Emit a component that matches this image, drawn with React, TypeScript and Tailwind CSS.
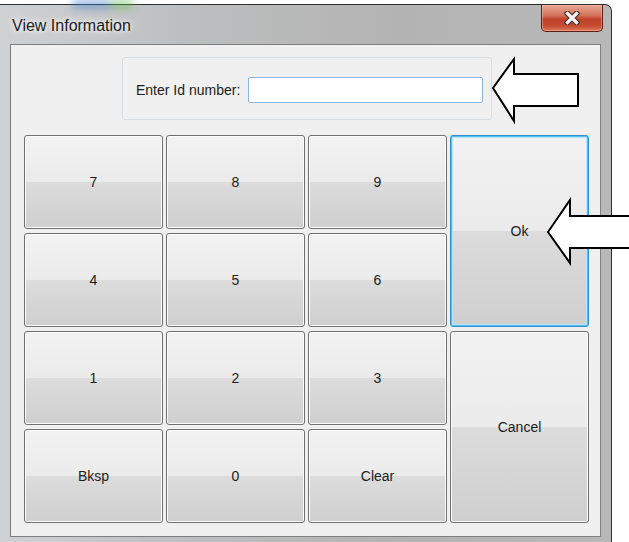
import React from "react";

type Key = { label: string; span?: boolean; primary?: boolean };

const keys: Key[] = [
  { label: "7" },
  { label: "8" },
  { label: "9" },
  { label: "Ok", span: true, primary: true },
  { label: "4" },
  { label: "5" },
  { label: "6" },
  { label: "1" },
  { label: "2" },
  { label: "3" },
  { label: "Cancel", span: true },
  { label: "Bksp" },
  { label: "0" },
  { label: "Clear" },
];

function KeyButton({ k }: { k: Key }) {
  return (
    <button
      className={`flex items-center justify-center rounded-[3px] border text-[14px] text-[#1c1c1c] bg-[linear-gradient(to_bottom,#f2f2f2_0%,#ebebeb_50%,#dcdcdc_50%,#cfcfcf_100%)] ${
        k.span ? "row-span-2" : ""
      } ${
        k.primary
          ? "border-[#2f8fcf] shadow-[inset_0_0_0_1px_#4fc0f0,inset_0_0_0_2px_#b8e6f8]"
          : "border-[#707070] shadow-[inset_0_0_0_1px_#fbfbfb]"
      }`}
    >
      {k.label}
    </button>
  );
}

function CloseGlyph() {
  return (
    <svg width="16" height="14" viewBox="0 0 16 14">
      <path d="M3.5 2.5 L12.5 11.5 M12.5 2.5 L3.5 11.5" stroke="#4a3030" strokeWidth="5.5" strokeLinecap="square" />
      <path d="M3.5 2.5 L12.5 11.5 M12.5 2.5 L3.5 11.5" stroke="#f4f4f4" strokeWidth="3.2" strokeLinecap="square" />
    </svg>
  );
}

export default function App() {
  return (
    <div className="relative w-[629px] h-[542px] overflow-hidden bg-white font-['Liberation_Sans',Arial,sans-serif]">
      {/* dialog window */}
      <div className="mt-[4px] w-[612px] h-[538px] flex flex-col pl-[10px] pr-[10px] pb-[5px] border-t border-r border-[#2e2e2e] rounded-tr-[7px] bg-[linear-gradient(to_right,#cfd1d3_0%,#bdbebf_30%,#b3b3b3_65%,#b8b8b8_100%)]">
        {/* title bar */}
        <div className="relative h-[39px] flex items-start justify-between">
          <span className="absolute -top-[5px] left-[62px] w-[40px] h-[8px] rounded-full bg-[#3f7fd0] opacity-60 blur-[4px]" />
          <span className="absolute -top-[5px] left-[100px] w-[24px] h-[8px] rounded-full bg-[#5fbf4f] opacity-60 blur-[4px]" />
          <span className="relative mt-[9px] ml-[2px] text-[16px] text-[#1b1b1b] [text-shadow:0_0_8px_#ffffff,0_0_4px_#ffffff]">
            View Information
          </span>
          <div className="-mr-[2px] w-[62px] h-[27px] flex items-center justify-center rounded-b-[5px] border border-t-0 border-[#5b1d14] bg-[linear-gradient(to_bottom,#e9a896_0%,#d3735a_40%,#c0412a_55%,#c54a30_80%,#dc7a5a_100%)] shadow-[inset_0_0_0_1px_rgba(255,200,180,0.45)]">
            <CloseGlyph />
          </div>
        </div>

        {/* client area */}
        <div className="flex-1 flex flex-col bg-[#f0f0f0] border border-[#7f7f7f]">
          <div className="ml-[111px] mt-[12px] w-[370px] h-[63px] flex items-center pl-[13px] pr-[8px] pt-[3px] rounded-[3px] border border-[#d8dde2]">
            <span className="text-[14px] text-[#1c1c1c]">Enter Id number:</span>
            <input
              type="text"
              className="ml-auto w-[235px] h-[26px] rounded-[2px] border border-[#8fb6e2] bg-white outline-none"
            />
          </div>

          <div className="ml-[13px] mt-[15px] grid grid-cols-[repeat(4,139px)] grid-rows-[repeat(4,94px)] gap-x-[3px] gap-y-[4px]">
            {keys.map((k) => (
              <KeyButton key={k.label} k={k} />
            ))}
          </div>
        </div>
      </div>

      {/* callout arrows */}
      <svg className="absolute left-0 top-0 pointer-events-none" width="629" height="542">
        <polygon
          points="493,88 514,59 514,74 578,74 578,106 514,106 514,121"
          fill="#ffffff"
          stroke="#000000"
          strokeWidth="2"
          strokeLinejoin="miter"
        />
        <polygon
          points="548,232 570,200 570,216 640,216 640,248 570,248 570,263"
          fill="#ffffff"
          stroke="#000000"
          strokeWidth="2"
          strokeLinejoin="miter"
        />
      </svg>
    </div>
  );
}
